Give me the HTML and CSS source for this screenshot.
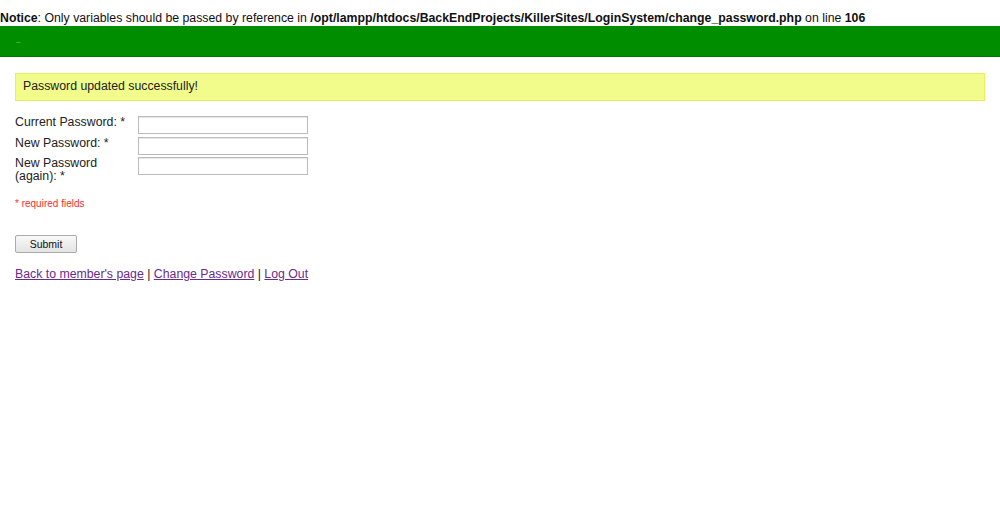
FILE: index.html
```html
<!DOCTYPE html>
<html lang="en">

<head>
	<meta charset="UTF-8">
	<title>Change Password</title>
	<link rel="stylesheet" href="styles.css">
</head>

<body>
	<div class="notice"><b>Notice</b>: Only variables should be passed by reference in <b>/opt/lampp/htdocs/BackEndProjects/KillerSites/LoginSystem/change_password.php</b> on line <b>106</b></div>

	<div class="header">
		<span class="nav">&ndash;</span>
	</div>

	<div class="content">
		<div class="success">Password updated successfully!</div>

		<form class="pwform" method="post" action="">
			<div class="row">
				<label for="current">Current Password: *</label>
				<input type="password" id="current" name="current">
			</div>
			<div class="row">
				<label for="newpw">New Password: *</label>
				<input type="password" id="newpw" name="newpw">
			</div>
			<div class="row">
				<label for="again">New Password (again): *</label>
				<input type="password" id="again" name="again">
			</div>

			<p class="required">* required fields</p>

			<input type="submit" class="butn" value="Submit">
		</form>

		<p class="links">
			<a href="#">Back to member's page</a> |
			<a href="#">Change Password</a> |
			<a href="#">Log Out</a>
		</p>
	</div>
</body>

</html>
```

FILE: styles.css
```css
body {
	margin: 0;
	background: #fff;
	font-family: "Liberation Sans", Arial, sans-serif;
	font-size: 12.3px;
	color: #222;
}

.notice {
	padding-top: 11px;
	height: 15px;
	color: #111;
	white-space: nowrap;
}

.header {
	height: 30px;
	background: #008e00;
	border-bottom: 1px solid #007a00;
	padding-left: 16px;
}

.nav {
	display: inline-block;
	margin-top: 11px;
	font-size: 8px;
	color: #7fc07f;
}

.content {
	padding: 16px 15px;
}

.success {
	background: #f1fc8a;
	border: 1px solid #e7ef5c;
	padding: 5px 7px 7px;
	margin-bottom: 15px;
}

.row {
	display: flex;
	align-items: flex-start;
	margin-bottom: 2.5px;
}

.row label {
	width: 123px;
	line-height: 13px;
	padding-top: 0;
}

.row input {
	width: 166px;
	height: 14px;
	margin: 0;
	padding: 1px;
	border: 1px solid #bbb;
	box-shadow: inset 0 1px 1px #e5e5e5;
	background: #fff;
}

.required {
	color: #ff2b2b;
	font-size: 10px;
	margin: 15px 0 26px;
}

.butn {
	width: 62px;
	height: 18px;
	padding: 0;
	border: 1px solid #aaa;
	border-radius: 2px;
	background: linear-gradient(#f8f8f8, #e4e4e4);
	font-family: "Liberation Sans", Arial, sans-serif;
	font-size: 10.5px;
	color: #111;
}

.links {
	margin: 14px 0;
}

.links a {
	color: #6b2a8f;
}
```
